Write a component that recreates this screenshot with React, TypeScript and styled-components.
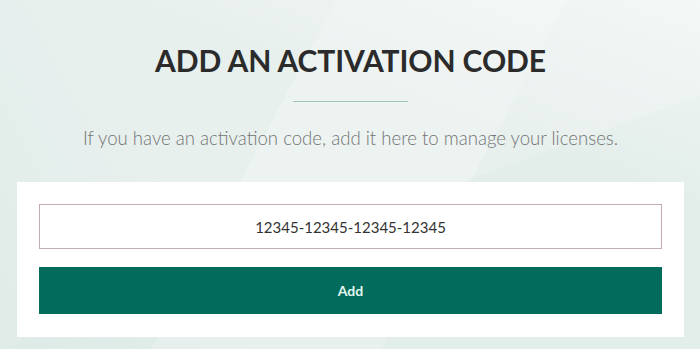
import * as React from 'react';
import styled, { createGlobalStyle } from 'styled-components';

const GlobalStyle = createGlobalStyle`
  html, body {
    margin: 0;
    padding: 0;
  }
  body {
    font-family: Lato, "Open Sans", Arial, sans-serif;
  }
`;

const Page = styled.div`
  height: 349px;
  box-sizing: border-box;
  padding: 42px 16px 0 17px;
  display: flex;
  flex-direction: column;
  align-items: center;
  background-color: #e8f0ee;
  background-image:
    linear-gradient(118deg, rgba(255, 255, 255, 0) 38%, rgba(255, 255, 255, 0.18) 38%, rgba(255, 255, 255, 0.18) 64%, rgba(255, 255, 255, 0) 64%),
    linear-gradient(62deg, rgba(214, 230, 226, 0.45) 0%, rgba(214, 230, 226, 0) 30%),
    linear-gradient(200deg, rgba(255, 255, 255, 0.5) 0%, rgba(255, 255, 255, 0) 35%),
    linear-gradient(160deg, rgba(255, 255, 255, 0) 58%, rgba(222, 235, 231, 0.5) 58%);
  overflow: hidden;
`;

const Title = styled.h1`
  margin: 0;
  font-size: 30px;
  line-height: 36px;
  font-weight: 700;
  color: #2b2b2b;
  letter-spacing: -0.1px;
`;

const Divider = styled.hr`
  width: 115px;
  height: 1px;
  border: 0;
  margin: 23px 0 0;
  background: #a3c2bb;
`;

const Lead = styled.p`
  margin: 24px 0 0;
  font-size: 18.6px;
  line-height: 24px;
  font-weight: 300;
  color: #747474;
`;

const Card = styled.form`
  align-self: stretch;
  margin-top: 32px;
  padding: 22px 22px 23px;
  background: #ffffff;
  display: flex;
  flex-direction: column;
  gap: 18px;
`;

const CodeInput = styled.input`
  height: 45px;
  box-sizing: border-box;
  border: 1px solid #c2acae;
  padding: 0 12px;
  text-align: center;
  font-family: Lato, "Open Sans", Arial, sans-serif;
  font-size: 15px;
  color: #333333;
  outline: none;
  background: #ffffff;
`;

const AddButton = styled.button`
  height: 47px;
  border: 0;
  background: #026b5b;
  color: #e3f7f0;
  font-family: Lato, "Open Sans", Arial, sans-serif;
  font-size: 14px;
  font-weight: 700;
  cursor: pointer;
`;

export default function App() {
  return (
    <>
      <GlobalStyle />
      <Page>
        <Title>ADD AN ACTIVATION CODE</Title>
        <Divider />
        <Lead>If you have an activation code, add it here to manage your licenses.</Lead>
        <Card onSubmit={(e) => e.preventDefault()}>
          <CodeInput defaultValue="12345-12345-12345-12345" />
          <AddButton type="submit">Add</AddButton>
        </Card>
      </Page>
    </>
  );
}
